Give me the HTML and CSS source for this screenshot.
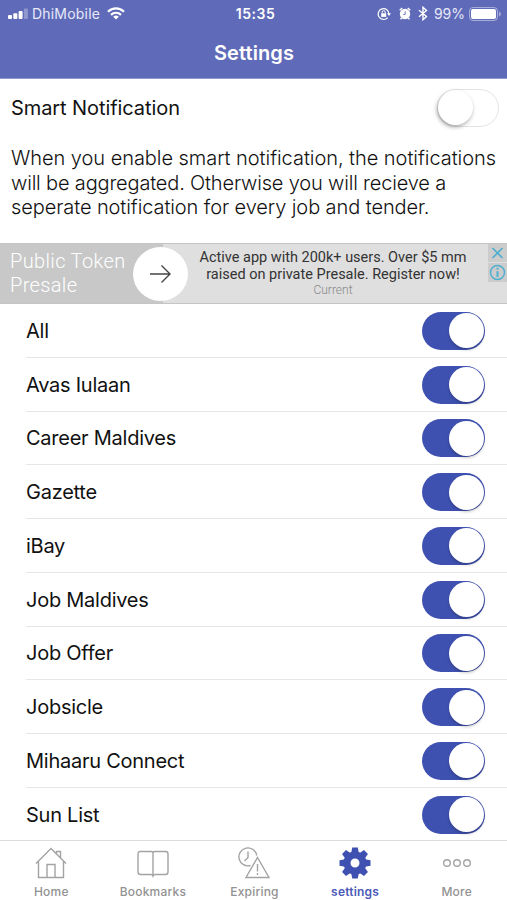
FILE: index.html
```html
<!DOCTYPE html>
<html lang="en">
<head>
  <meta charset="UTF-8">
  <meta name="viewport" content="width=device-width, initial-scale=1.0">
  <title>Settings</title>
  <link rel="stylesheet" href="styles.css">
</head>
<body>
  <header class="header">
    <div class="status-bar">
      <div class="status-left">
        <svg class="signal" width="20" height="12" viewBox="0 0 20 12" fill="#fff">
          <rect x="0" y="7" width="4" height="4" rx="1"/>
          <rect x="5.3" y="5.3" width="4" height="5.7" rx="1"/>
          <rect x="10.6" y="3" width="4" height="8" rx="1"/>
          <rect x="15.9" y="0.5" width="4" height="10.5" rx="1" opacity="0.3"/>
        </svg>
        <span class="carrier">DhiMobile</span>
        <svg class="wifi" width="18" height="13" viewBox="0 0 18 13" fill="none" stroke="#fff" stroke-width="2.2">
          <path d="M1 4.8C5.5 0.3 12.5 0.3 17 4.8"/>
          <path d="M4 7.9C6.9 5 11.1 5 14 7.9"/>
          <path d="M6.2 9.7Q9 7.3 11.8 9.7L9 12.6Z" fill="#fff" stroke="none"/>
        </svg>
      </div>
      <span class="time">15:35</span>
      <div class="status-right">
        <svg width="14" height="14" viewBox="0 0 14 14" fill="none" stroke="#fff" stroke-width="1.2">
          <path d="M10.7 10.6A5.4 5.4 0 1 1 12 7"/>
          <path d="M10 6.3h4L12 9z" fill="#fff" stroke="none"/>
          <rect x="4.2" y="6.3" width="5" height="3.6" fill="#fff" stroke="none"/>
          <path d="M5.2 6.5V5.2a1.5 1.5 0 0 1 3 0v1.3" stroke-width="1"/>
        </svg>
        <svg class="alarm" width="12" height="13" viewBox="0 0 12 13">
          <circle cx="6" cy="7" r="5.2" fill="#fff"/>
          <path d="M0.7 3.3L3.3 1M8.7 1L11.3 3.3M2.6 11L1.5 12.3M9.4 11L10.5 12.3" stroke="#fff" stroke-width="1.5"/>
          <path d="M6.2 4.3v3L4.2 7.6" fill="none" stroke="#5f6bb8" stroke-width="0.9"/>
        </svg>
        <svg class="bluetooth" width="10" height="15" viewBox="0 0 10 15" fill="none" stroke="#fff" stroke-width="1.4">
          <path d="M1 4.2L8.5 10.5L5 13.7V1.3L8.5 4.5L1 10.8"/>
        </svg>
        <span class="percent">99%</span>
        <svg class="battery" width="32" height="14" viewBox="0 0 32 14">
          <rect x="0.5" y="0.5" width="28" height="13" rx="3.5" fill="none" stroke="#fff" opacity="0.45"/>
          <rect x="2" y="2" width="25" height="10" rx="2" fill="#fff"/>
          <path d="M30 4.5a2.6 2.6 0 0 1 0 5z" fill="#fff" opacity="0.45"/>
        </svg>
      </div>
    </div>
    <h1>Settings</h1>
  </header>

  <section class="smart">
    <div class="smart-row">
      <span class="smart-title">Smart Notification</span>
      <span class="switch off"></span>
    </div>
    <p class="smart-text">
      <span class="line-1">When you enable smart notification, the notifications</span><br>
      <span class="line-2">will be aggregated. Otherwise you will recieve a</span><br>
      <span class="line-3">seperate notification for every job and tender.</span>
    </p>
  </section>

  <section class="ad">
    <div class="ad-title">Public Token<br>Presale</div>
    <div class="ad-arrow">
      <svg width="23" height="20" viewBox="0 0 23 20" fill="none" stroke="#444" stroke-width="1.4">
        <path d="M1 10H21M12.500 1.500L21 10L12.500 18.500"/>
      </svg>
    </div>
    <div class="ad-body">
      <div class="ad-text">Active app with 200k+ users. Over $5 mm<br>raised on private Presale. Register now!</div>
      <div class="ad-source">Current</div>
    </div>
    <div class="ad-buttons">
      <svg width="19" height="18" viewBox="0 0 19 18" fill="none" stroke="#4eafd0" stroke-width="1.7">
        <path d="M4.500 4L14.500 14M14.500 4L4.500 14"/>
      </svg>
      <svg width="19" height="19" viewBox="0 0 19 19" fill="none" stroke="#4eafd0" stroke-width="1.5">
        <circle cx="9.5" cy="9.5" r="7"/>
        <path d="M9.500 8.200V14M9.500 4.800V6.600" stroke-width="2"/>
      </svg>
    </div>
  </section>

  <main class="list">
    <div class="row"><span>All</span><span class="switch"></span></div>
    <div class="row"><span>Avas Iulaan</span><span class="switch"></span></div>
    <div class="row"><span>Career Maldives</span><span class="switch"></span></div>
    <div class="row"><span>Gazette</span><span class="switch"></span></div>
    <div class="row"><span>iBay</span><span class="switch"></span></div>
    <div class="row"><span>Job Maldives</span><span class="switch"></span></div>
    <div class="row"><span>Job Offer</span><span class="switch"></span></div>
    <div class="row"><span>Jobsicle</span><span class="switch"></span></div>
    <div class="row"><span>Mihaaru Connect</span><span class="switch"></span></div>
    <div class="row"><span>Sun List</span><span class="switch"></span></div>
  </main>

  <nav class="tabs">
    <div class="tab">
      <svg width="34" height="34" viewBox="0 0 34 34">
        <path d="M2 17.500L17 2.500L32 17.500M4.500 15.500V31.500H29.500V15.500M13 31.500V18.500H21V31.500M22.500 8V5.500H26.500V12"/>
      </svg>
      <span>Home</span>
    </div>
    <div class="tab">
      <svg width="34" height="34" viewBox="0 0 34 34">
        <path d="M17 6.500Q16.500 5.500 15 5.500H4.500Q2 5.500 2 8V26Q2 28.500 4.500 28.500H15Q16.500 28.500 17 30Q17.500 28.500 19 28.500H29.500Q32 28.500 32 26V8Q32 5.500 29.500 5.500H19Q17.500 5.500 17 6.500V30"/>
      </svg>
      <span>Bookmarks</span>
    </div>
    <div class="tab">
      <svg width="34" height="34" viewBox="0 0 34 34">
        <path d="M13.500 19.500A9 9 0 1 1 19.800 9.500M11 5.500V11.500L7.500 15M20.500 11.500L32 31.500H9ZM20.500 18V25.500M20.500 27V29"/>
      </svg>
      <span>Expiring</span>
    </div>
    <div class="tab active">
      <svg width="34" height="34" viewBox="-17 -17 34 34">
        <defs>
          <path id="tooth" d="M-3.800 -10L-2.800 -15.500H2.800L3.800 -10Z"/>
        </defs>
        <circle r="8" fill="none" stroke="#3f51b0" stroke-width="7"/>
        <g fill="#3f51b0" stroke="none">
          <use href="#tooth"/>
          <use href="#tooth" transform="rotate(45)"/>
          <use href="#tooth" transform="rotate(90)"/>
          <use href="#tooth" transform="rotate(135)"/>
          <use href="#tooth" transform="rotate(180)"/>
          <use href="#tooth" transform="rotate(225)"/>
          <use href="#tooth" transform="rotate(270)"/>
          <use href="#tooth" transform="rotate(315)"/>
        </g>
      </svg>
      <span>settings</span>
    </div>
    <div class="tab">
      <svg width="34" height="34" viewBox="0 0 34 34">
        <circle cx="7" cy="17" r="3.3"/>
        <circle cx="17" cy="17" r="3.3"/>
        <circle cx="27" cy="17" r="3.3"/>
      </svg>
      <span>More</span>
    </div>
  </nav>
</body>
</html>
```
FILE: styles.css
```css
* {
  box-sizing: border-box;
}
body {
  margin: 0;
  height: 900px;
  display: flex;
  flex-direction: column;
  overflow: hidden;
  background: #fff;
  color: #111;
  font-family: Inter, "Liberation Sans", sans-serif;
}
svg {
  display: block;
  flex: none;
}
.header {
  height: 79px;
  flex: none;
  background: #5f6bb8;
  border-bottom: 1px solid #8d9bd0;
  color: #fff;
}
.status-bar {
  display: grid;
  grid-template-columns: 1fr auto 1fr;
  align-items: center;
  height: 27px;
  padding: 0 6px 0 8px;
  font-size: 14px;
}
.status-left, .status-right {
  display: flex;
  align-items: center;
}
.status-right {
  justify-content: flex-end;
}
.carrier {
  margin: 0 7px 0 4px;
  color: #e7e9f8;
  letter-spacing: 0.2px;
}
.time {
  margin-left: 2px;
  font-weight: 600;
  letter-spacing: 0.5px;
}
.alarm {
  margin-left: 8px;
}
.bluetooth {
  margin-left: 7px;
}
.percent {
  margin: 0 4px 0 6px;
  color: #e7e9f8;
}
h1 {
  margin: 0;
  padding-left: 1px;
  line-height: 52px;
  font-size: 20px;
  font-weight: 600;
  letter-spacing: 0.1px;
  text-align: center;
}
.smart {
  height: 164px;
  flex: none;
  padding: 9px 8px 0 11px;
}
.smart-row {
  display: flex;
  justify-content: space-between;
  align-items: center;
  height: 39px;
}
.smart-title {
  font-size: 20px;
  letter-spacing: -0.08px;
}
.smart-text {
  margin: 19px 0 0;
  font-size: 20px;
  font-weight: 300;
  line-height: 24.7px;
  white-space: nowrap;
}
.line-1 {
  letter-spacing: -0.05px;
}
.line-2 {
  letter-spacing: -0.17px;
}
.line-3 {
  letter-spacing: -0.09px;
}
.switch {
  display: flex;
  justify-content: flex-end;
  width: 63px;
  height: 38px;
  padding: 1.5px;
  border-radius: 19px;
  background: #3f51b0;
}
.switch::before {
  content: "";
  width: 35px;
  height: 35px;
  border-radius: 50%;
  background: #fff;
  box-shadow: 0 2px 3px rgba(0,0,0,0.2);
}
.switch.off {
  justify-content: flex-start;
  width: 62px;
  background: #fff;
  border: 1.5px solid #e4e4e4;
  padding: 0;
}
.switch.off::before {
  box-shadow: -1px 2px 4px rgba(0,0,0,0.35);
}
.ad {
  display: flex;
  align-items: center;
  height: 61px;
  flex: none;
  background: linear-gradient(to right, #c8c8c8 163px, #dfdfdf 163px);
  border-top: 1px solid #c5c5c5;
  border-bottom: 1px solid #c5c5c5;
  font-family: Roboto, sans-serif;
}
.ad-title {
  width: 133px;
  padding: 0 0 1px 10px;
  color: #fff;
  font-size: 20px;
  font-weight: 300;
  line-height: 24.5px;
  letter-spacing: 0.35px;
  white-space: nowrap;
}
.ad-arrow {
  display: flex;
  align-items: center;
  justify-content: center;
  width: 55px;
  height: 54px;
  border-radius: 50%;
  background: #fff;
}
.ad-body {
  flex: 1;
  padding: 0 10px 2px 0;
  text-align: center;
  white-space: nowrap;
}
.ad-text {
  color: #333;
  font-size: 14.5px;
  line-height: 17px;
}
.ad-source {
  color: #888;
  font-size: 12px;
  font-weight: 300;
  line-height: 14px;
}
.ad-buttons {
  align-self: flex-start;
  display: flex;
  flex-direction: column;
  gap: 1px;
  width: 19px;
}
.ad-buttons svg {
  background: #cccccc;
}
.list {
  flex: none;
  height: 536px;
  overflow: hidden;
}
.row {
  display: flex;
  justify-content: space-between;
  align-items: center;
  height: 53.75px;
  margin-left: 26px;
  padding: 1px 22px 0 0;
  border-bottom: 1px solid #e6e6e6;
  font-size: 20px;
  letter-spacing: -0.25px;
}
.tabs {
  flex: 1;
  display: flex;
  border-top: 1px solid #dcdcdc;
  background: #fff;
}
.tab {
  flex: 1;
  display: flex;
  flex-direction: column;
  align-items: center;
  padding: 5px 0 0 1px;
  color: #929292;
  font-size: 12px;
  font-weight: 500;
  letter-spacing: 0.2px;
}
.tab svg {
  fill: none;
  stroke: #a3a3a3;
  stroke-width: 1.4;
}
.tab span {
  margin-top: 4px;
}
.tab.active {
  padding-left: 0;
  color: #4c5bb8;
  font-weight: 600;
}
```
